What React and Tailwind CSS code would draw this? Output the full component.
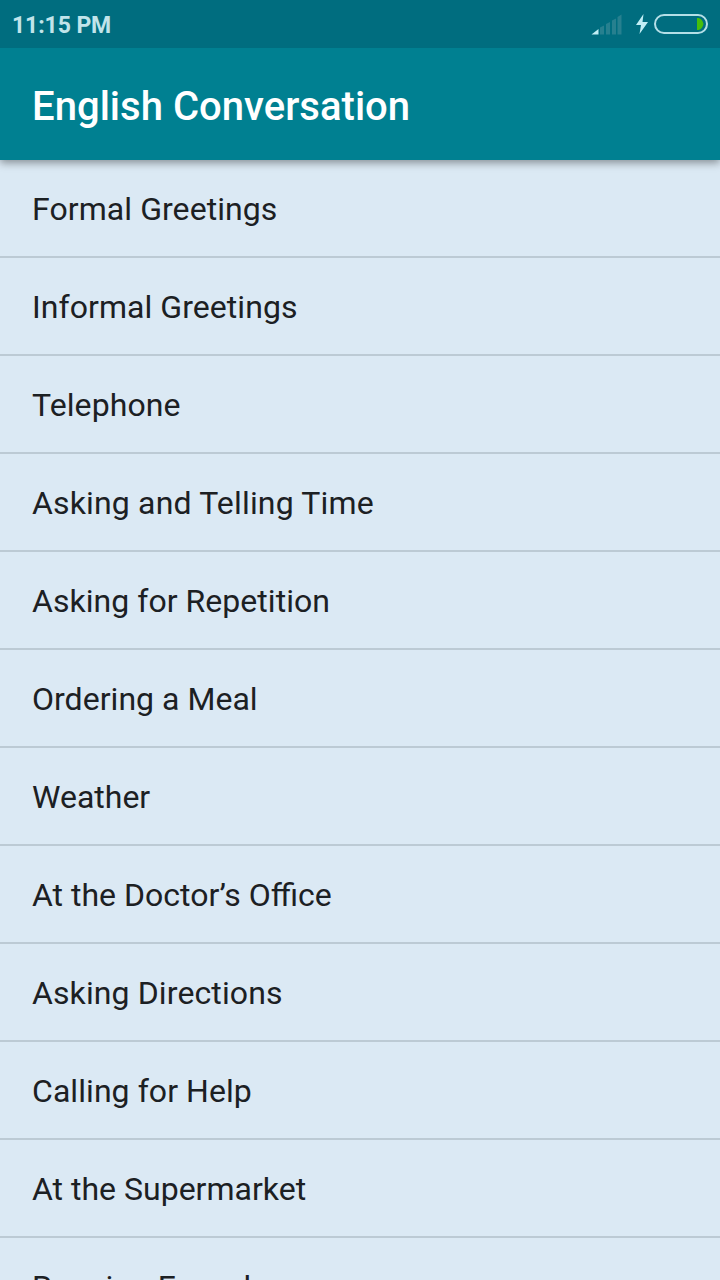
import React from "react";

const topics = [
  { title: "Formal Greetings", tracking: "tracking-[0.07px]" },
  { title: "Informal Greetings", tracking: "tracking-[0.06px]" },
  { title: "Telephone", tracking: "tracking-[0.1px]" },
  { title: "Asking and Telling Time", tracking: "tracking-[0.16px]" },
  { title: "Asking for Repetition", tracking: "tracking-[0.04px]" },
  { title: "Ordering a Meal", tracking: "tracking-[0.03px]" },
  { title: "Weather", tracking: "tracking-normal" },
  { title: "At the Doctor’s Office", tracking: "tracking-normal" },
  { title: "Asking Directions", tracking: "tracking-[0.11px]" },
  { title: "Calling for Help", tracking: "tracking-[0.06px]" },
  { title: "At the Supermarket", tracking: "tracking-normal" },
  { title: "Running Errands", tracking: "tracking-[0.2px]" },
];

function StatusBar() {
  return (
    <div className="z-20 flex h-12 shrink-0 items-center justify-between bg-[#006d7f] pl-3 text-[#c1e4ea]">
      <span className="pt-1 font-['Roboto',sans-serif] text-[23px] leading-[30px] font-bold tracking-[-0.1px]">
        11:15 PM
      </span>
      <svg className="h-12 w-[130px]" viewBox="590 0 130 48">
        <path d="M591.500 34.500L598.500 29V34.500Z" fill="#c1eef5" />
        <path
          d="M600 27.500L604 25.500V34.500H600zM606 24L610 22V34.500H606zM612 20.500L616 18.500V34.500H612zM617.500 17L621.500 14.500V34.500H617.500z"
          fill="#27808f"
        />
        <path d="M643.500 14L636 25H641L639.500 34L648 22H642.500Z" fill="#c1eef5" />
        <rect x="655" y="15" width="52" height="18" rx="9" fill="none" stroke="#b4dfe7" strokeWidth="2" />
        <path d="M697 18h1.500q4 1 5 6q-1 5-5 6h-1.500z" fill="#46be0c" />
      </svg>
    </div>
  );
}

function App() {
  return (
    <div className="flex h-[1280px] w-[720px] flex-col overflow-hidden bg-[#dbe9f4] font-['Roboto',sans-serif]">
      <StatusBar />
      <header className="z-10 flex h-28 shrink-0 items-center bg-[#008091] px-8 pt-1.5 shadow-[0_3px_8px_rgba(0,0,0,0.38)]">
        <h1 className="text-[40px] leading-[48px] font-medium tracking-[0.03px] text-white">English Conversation</h1>
      </header>
      <ul>
        {topics.map(({ title, tracking }) => (
          <li
            key={title}
            className="flex h-[98px] items-center border-b-2 border-[#bccad4] px-8 pt-0.5 text-[32px] text-[#1c2023]"
          >
            <span className={tracking}>{title}</span>
          </li>
        ))}
      </ul>
    </div>
  );
}

export default App;
